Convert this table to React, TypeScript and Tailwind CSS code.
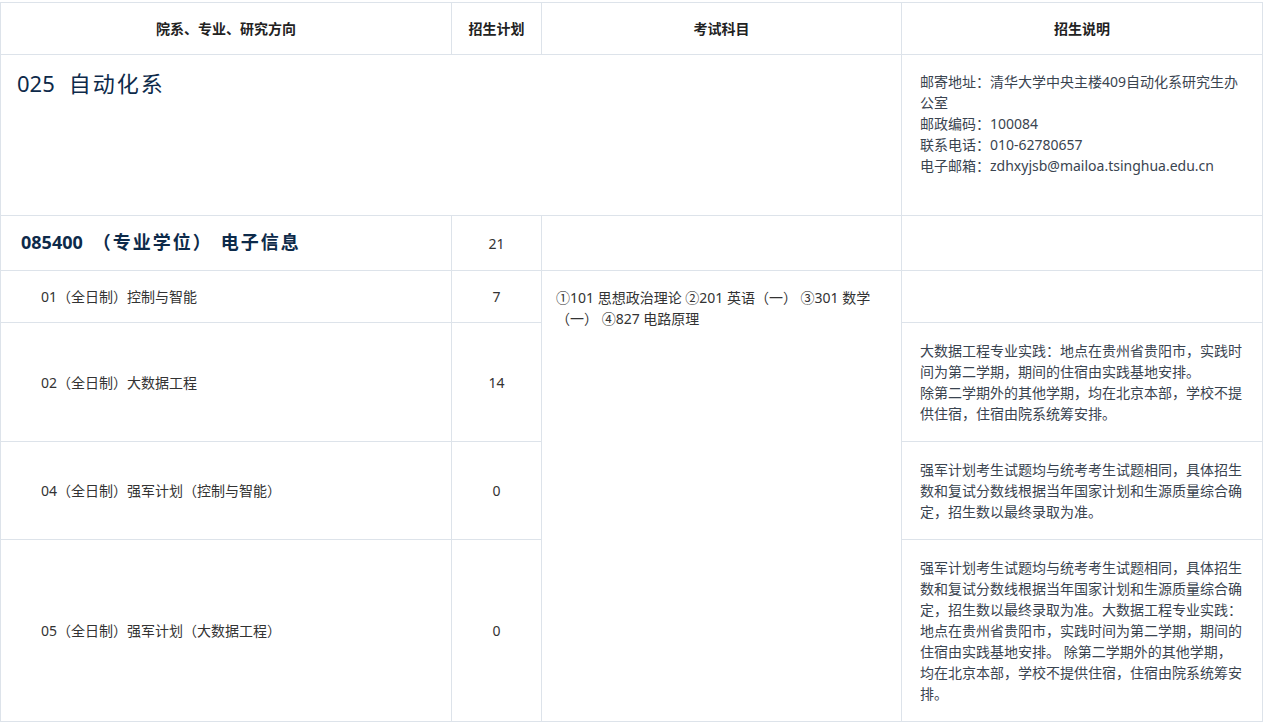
import React from "react";

const bd = "border border-[#dde3ea]";

export default function App() {
  return (
    <div
      className="w-[1265px] h-[724px] bg-white pt-[2px] text-[14px] leading-[21px] text-[#333]"
      style={{ fontFamily: '"Noto Sans", "Noto Sans CJK SC", sans-serif' }}
    >
      <table className="w-[1262px] table-fixed border-collapse">
        <colgroup>
          <col className="w-[451px]" />
          <col className="w-[90px]" />
          <col className="w-[360px]" />
          <col className="w-[361px]" />
        </colgroup>
        <thead>
          <tr className="h-[52px]">
            <th className={`${bd} font-bold text-[#222] text-center align-middle`}>院系、专业、研究方向</th>
            <th className={`${bd} font-bold text-[#222] text-center align-middle`}>招生计划</th>
            <th className={`${bd} font-bold text-[#222] text-center align-middle`}>考试科目</th>
            <th className={`${bd} font-bold text-[#222] text-center align-middle`}>招生说明</th>
          </tr>
        </thead>
        <tbody>
          <tr className="h-[161px]">
            <td colSpan={3} className={`${bd} align-top pl-[16px] pt-[14px]`}>
              <span className="text-[22px] leading-[28px] text-[#0d2a4a]">025</span>
              <span className="ml-[14px] text-[22px] leading-[28px] text-[#0d2a4a] tracking-[2px]">自动化系</span>
            </td>
            <td className={`${bd} align-top px-[18px] pt-[16px] text-[#3a4450]`}>
              邮寄地址：清华大学中央主楼409自动化系研究生办公室
              <br />
              邮政编码：100084
              <br />
              联系电话：010-62780657
              <br />
              电子邮箱：zdhxyjsb@mailoa.tsinghua.edu.cn
            </td>
          </tr>
          <tr className="h-[55px]">
            <td className={`${bd} align-middle pl-[20px]`}>
              <span className="text-[18px] font-bold text-[#0d2a4a]">085400</span>
              <span className="ml-[10px] text-[18px] font-bold text-[#0d2a4a] tracking-[2px]">（专业学位）</span>
              <span className="ml-[8px] text-[18px] font-bold text-[#0d2a4a] tracking-[2px]">电子信息</span>
            </td>
            <td className={`${bd} text-center align-middle`}>21</td>
            <td className={bd}></td>
            <td className={bd}></td>
          </tr>
          <tr className="h-[52px]">
            <td className={`${bd} align-middle pl-[40px]`}>01（全日制）控制与智能</td>
            <td className={`${bd} text-center align-middle`}>7</td>
            <td rowSpan={4} className={`${bd} align-top pl-[14px] pr-[16px] pt-[16px]`}>
              ①101 思想政治理论 ②201 英语（一） ③301 数学（一） ④827 电路原理
            </td>
            <td className={bd}></td>
          </tr>
          <tr className="h-[119px]">
            <td className={`${bd} align-middle pl-[40px]`}>02（全日制）大数据工程</td>
            <td className={`${bd} text-center align-middle`}>14</td>
            <td className={`${bd} align-middle px-[18px] text-[#3a4450]`}>
              大数据工程专业实践：地点在贵州省贵阳市，实践时间为第二学期，期间的住宿由实践基地安排。
              <br />
              除第二学期外的其他学期，均在北京本部，学校不提供住宿，住宿由院系统筹安排。
            </td>
          </tr>
          <tr className="h-[98px]">
            <td className={`${bd} align-middle pl-[40px]`}>04（全日制）强军计划（控制与智能）</td>
            <td className={`${bd} text-center align-middle`}>0</td>
            <td className={`${bd} align-middle px-[18px] text-[#3a4450]`}>
              强军计划考生试题均与统考考生试题相同，具体招生数和复试分数线根据当年国家计划和生源质量综合确定，招生数以最终录取为准。
            </td>
          </tr>
          <tr className="h-[182px]">
            <td className={`${bd} align-middle pl-[40px]`}>05（全日制）强军计划（大数据工程）</td>
            <td className={`${bd} text-center align-middle`}>0</td>
            <td className={`${bd} align-middle px-[18px] text-[#3a4450]`}>
              强军计划考生试题均与统考考生试题相同，具体招生数和复试分数线根据当年国家计划和生源质量综合确定，招生数以最终录取为准。大数据工程专业实践：地点在贵州省贵阳市，实践时间为第二学期，期间的住宿由实践基地安排。
              除第二学期外的其他学期，均在北京本部，学校不提供住宿，住宿由院系统筹安排。
            </td>
          </tr>
        </tbody>
      </table>
    </div>
  );
}
